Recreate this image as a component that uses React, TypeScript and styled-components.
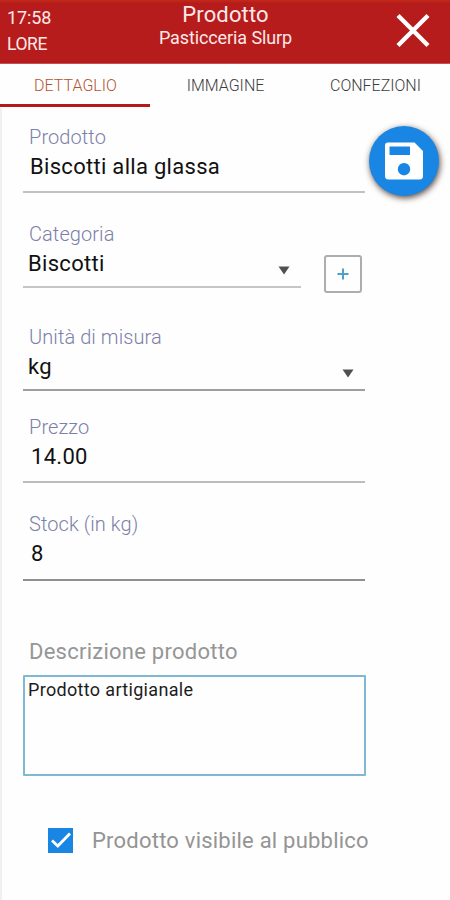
import React from "react";
import styled, { createGlobalStyle } from "styled-components";

const GlobalStyle = createGlobalStyle`
  *, *::before, *::after { box-sizing: border-box; }
  body {
    margin: 0;
    background: #fefefe;
    font-family: Roboto, "Liberation Sans", sans-serif;
  }
  button { font: inherit; padding: 0; cursor: pointer; }
`;

const Screen = styled.div`
  width: 450px;
  height: 900px;
  overflow: hidden;
  display: flex;
  flex-direction: column;
  background: #fefefe;
`;

const Header = styled.header`
  flex: none;
  height: 64px;
  display: grid;
  grid-template-columns: 75px 1fr 75px;
  background: linear-gradient(#c22a16 0, #b71c1c 3px, #b71c1c 62px, #b2191b 63px, #d98a8a 64px);
  color: #fbe9e9;
`;

const Status = styled.div`
  padding: 5px 0 0 7px;
  display: flex;
  flex-direction: column;
`;

const Clock = styled.span`
  font-size: 18px;
  line-height: 26px;
  letter-spacing: -0.1px;
`;

const User = styled.span`
  font-size: 17.5px;
  line-height: 26px;
  letter-spacing: -0.4px;
`;

const Heading = styled.div`
  display: flex;
  flex-direction: column;
  align-items: center;
  padding: 2px 0 0 1px;
`;

const Title = styled.h1`
  margin: 0;
  font-size: 22px;
  font-weight: 400;
  line-height: 25px;
  letter-spacing: 0.15px;
`;

const Subtitle = styled.span`
  font-size: 18px;
  line-height: 22px;
  letter-spacing: -0.1px;
`;

const CloseButton = styled.button`
  border: 0;
  background: none;
  color: #fff;
  display: flex;
  padding: 13px 0 0 20px;
`;

const Tabs = styled.nav`
  flex: none;
  height: 44px;
  display: grid;
  grid-template-columns: repeat(3, 150px);
`;

const Tab = styled.button<{ $active?: boolean }>`
  border: 0;
  border-bottom: 3px solid ${(p) => (p.$active ? "#b3191d" : "transparent")};
  background: none;
  color: ${(p) => (p.$active ? "#b4532f" : "#3c3c3c")};
  font-size: 16px;
  font-weight: 300;
  line-height: 42px;
  height: 43px;
  padding: 1px 0 0 1px;
`;

const Body = styled.main`
  flex: 1;
  border-left: 2px solid #f0f0f0;
  padding: 17px 10px 0 21px;
  display: flex;
  flex-direction: column;
`;

const Row = styled.div<{ $gap: number }>`
  display: flex;
  align-items: flex-start;
  margin-bottom: ${(p) => p.$gap}px;
`;

const Field = styled.div<{ $height: number; $width?: number; $line: string }>`
  width: ${(p) => p.$width ?? 342}px;
  height: ${(p) => p.$height}px;
  border-bottom: 2px solid ${(p) => p.$line};
  display: flex;
  flex-direction: column;
`;

const Label = styled.label`
  padding-left: 6px;
  font-size: 20px;
  font-weight: 300;
  line-height: 24px;
  letter-spacing: 0.08px;
  color: #7c80a8;
`;

const ValueRow = styled.div<{ $indent: number; $arrowInset?: number }>`
  display: flex;
  justify-content: space-between;
  padding: 0 ${(p) => p.$arrowInset ?? 0}px 0 ${(p) => p.$indent}px;
`;

const Value = styled.span`
  font-size: 22px;
  line-height: 35px;
  letter-spacing: 0.3px;
  color: #111;
`;

const Arrow = styled.svg`
  margin-top: 20px;
  fill: #505050;
`;

const SaveButton = styled.button`
  width: 70px;
  height: 70px;
  margin: 1px 0 -4px 4px;
  flex: none;
  border: 0;
  border-radius: 50%;
  background: #1a86e4;
  box-shadow: 1px 2px 6px rgba(50, 25, 15, 0.8);
  display: flex;
  align-items: center;
  justify-content: center;
`;

const AddButton = styled.button`
  width: 38px;
  height: 38px;
  margin: 33px 0 -5px 23px;
  flex: none;
  border: 2px solid #adadad;
  border-radius: 3px;
  background: #fefefe;
  display: flex;
  align-items: center;
  justify-content: center;
`;

const DescriptionLabel = styled.label`
  padding-left: 6px;
  font-size: 22px;
  line-height: 30px;
  letter-spacing: 0.25px;
  color: #969696;
`;

const Description = styled.div`
  width: 343px;
  height: 101px;
  margin-top: 8px;
  border: 2px solid #7fb8d2;
  border-radius: 1px;
  padding: 1px 3px;
  font-size: 18px;
  line-height: 24px;
  letter-spacing: 0.33px;
  color: #1c1c1c;
`;

const VisibleRow = styled.div`
  display: flex;
  align-items: center;
  margin: 50px 0 0 25px;
  height: 28px;
`;

const CheckBox = styled.span`
  width: 25px;
  height: 25px;
  background: #1a86e4;
  display: flex;
`;

const VisibleLabel = styled.span`
  margin-left: 19px;
  padding-top: 2px;
  font-size: 22px;
  line-height: 28px;
  letter-spacing: 0.22px;
  color: #949494;
`;

const DropArrow = () => (
  <Arrow width="12" height="9" viewBox="0 0 12 9">
    <path d="M0.5 0.5h11L6 8.5z" />
  </Arrow>
);

export default function App() {
  return (
    <>
      <GlobalStyle />
      <Screen>
        <Header>
          <Status>
            <Clock>17:58</Clock>
            <User>LORE</User>
          </Status>
          <Heading>
            <Title>Prodotto</Title>
            <Subtitle>Pasticceria Slurp</Subtitle>
          </Heading>
          <CloseButton aria-label="Chiudi">
            <svg width="36" height="36" viewBox="0 0 36 36" stroke="currentColor" strokeWidth="4.4">
              <path d="M3 2.500L33 32.500M33 2.500L3 32.500" />
            </svg>
          </CloseButton>
        </Header>
        <Tabs>
          <Tab $active>DETTAGLIO</Tab>
          <Tab>IMMAGINE</Tab>
          <Tab>CONFEZIONI</Tab>
        </Tabs>
        <Body>
          <Row $gap={29}>
            <Field $height={68} $line="#c2c2c2">
              <Label>Prodotto</Label>
              <ValueRow $indent={7}>
                <Value>Biscotti alla glassa</Value>
              </ValueRow>
            </Field>
            <SaveButton aria-label="Salva">
              <svg width="38" height="38" viewBox="0 0 38 38">
                <path
                  fill="#fff"
                  fillRule="evenodd"
                  d="M3 0.500H29.500L38 9V34a3.500 3.500 0 0 1-3.500 3.500H3.500A3.500 3.500 0 0 1 0 34V3.500A3 3 0 0 1 3 0.500ZM4.500 4.500V13H25V4.500ZM19 21a6.200 6.200 0 1 0 0.010 0Z"
                />
              </svg>
            </SaveButton>
          </Row>
          <Row $gap={37}>
            <Field $height={66} $width={278} $line="#c6c6c6">
              <Label>Categoria</Label>
              <ValueRow $indent={5} $arrowInset={11}>
                <Value>Biscotti</Value>
                <DropArrow />
              </ValueRow>
            </Field>
            <AddButton aria-label="Aggiungi">
              <svg width="12" height="12" viewBox="0 0 12 12" stroke="#4d9fce" strokeWidth="2">
                <path d="M6 0.500V11.500M0.500 6H11.500" />
              </svg>
            </AddButton>
          </Row>
          <Row $gap={24}>
            <Field $height={66} $line="#9e9e9e">
              <Label>Unità di misura</Label>
              <ValueRow $indent={5} $arrowInset={11}>
                <Value>kg</Value>
                <DropArrow />
              </ValueRow>
            </Field>
          </Row>
          <Row $gap={29}>
            <Field $height={68} $line="#bdbdbd">
              <Label>Prezzo</Label>
              <ValueRow $indent={8}>
                <Value>14.00</Value>
              </ValueRow>
            </Field>
          </Row>
          <Row $gap={56}>
            <Field $height={69} $line="#8f8f8f">
              <Label>Stock (in kg)</Label>
              <ValueRow $indent={8}>
                <Value>8</Value>
              </ValueRow>
            </Field>
          </Row>
          <DescriptionLabel>Descrizione prodotto</DescriptionLabel>
          <Description>Prodotto artigianale</Description>
          <VisibleRow>
            <CheckBox role="checkbox" aria-checked="true">
              <svg width="25" height="25" viewBox="0 0 25 25" fill="none" stroke="#fff" strokeWidth="2.8">
                <path d="M4 12.500L9.800 18L22 5.500" />
              </svg>
            </CheckBox>
            <VisibleLabel>Prodotto visibile al pubblico</VisibleLabel>
          </VisibleRow>
        </Body>
      </Screen>
    </>
  );
}
